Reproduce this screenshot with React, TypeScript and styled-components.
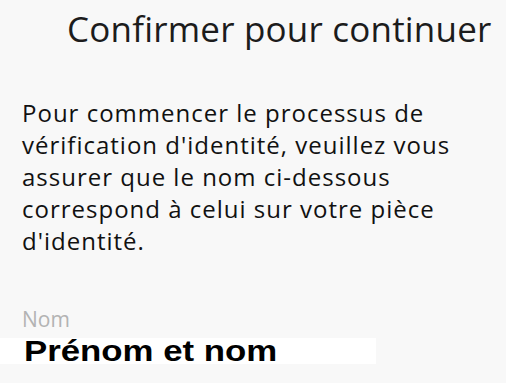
import React from 'react';
import styled, { createGlobalStyle } from 'styled-components';

const GlobalStyle = createGlobalStyle`
  html, body {
    margin: 0;
    padding: 0;
    background: #f8f8f8;
  }
  body {
    font-family: "Open Sans", "Noto Sans", sans-serif;
    font-variant-ligatures: none;
    color: #1a1a1a;
  }
`;

const Screen = styled.div`
  width: 506px;
  height: 383px;
  overflow: hidden;
  background: #f8f8f8;
  display: flex;
  flex-direction: column;
`;

const Title = styled.h1`
  margin: 0;
  padding: 6px 0 0 67px;
  font-size: 35px;
  font-weight: 400;
  line-height: 46px;
  letter-spacing: 0.2px;
  white-space: nowrap;
  color: #1c1c1c;
`;

const Intro = styled.p`
  margin: 45px 0 0;
  padding: 0 20px 0 22px;
  font-size: 24px;
  line-height: 32px;
  letter-spacing: 1px;
  color: #111;
`;

const Field = styled.div`
  margin-top: 49px;
  display: flex;
  flex-direction: column;
`;

const FieldLabel = styled.span`
  padding-left: 22px;
  font-size: 21px;
  line-height: 26px;
  color: #b3b3b3;
`;

const FieldValue = styled.div`
  width: 376px;
  height: 26px;
  margin-top: 6px;
  padding-left: 24px;
  box-sizing: border-box;
  background: #ffffff;
  font-family: "Liberation Sans", Arial, sans-serif;
  font-weight: 700;
  font-size: 29px;
  line-height: 26px;
  color: #000;
  white-space: nowrap;
`;

const WideText = styled.span`
  display: inline-block;
  transform: scaleX(1.2);
  transform-origin: left center;
`;

export default function App() {
  return (
    <>
      <GlobalStyle />
      <Screen>
        <Title>Confirmer pour continuer</Title>
        <Intro>
          Pour commencer le processus de vérification d'identité, veuillez vous
          assurer que le nom ci-dessous correspond à celui sur votre pièce
          d'identité.
        </Intro>
        <Field>
          <FieldLabel>Nom</FieldLabel>
          <FieldValue>
            <WideText>Prénom et nom</WideText>
          </FieldValue>
        </Field>
      </Screen>
    </>
  );
}
